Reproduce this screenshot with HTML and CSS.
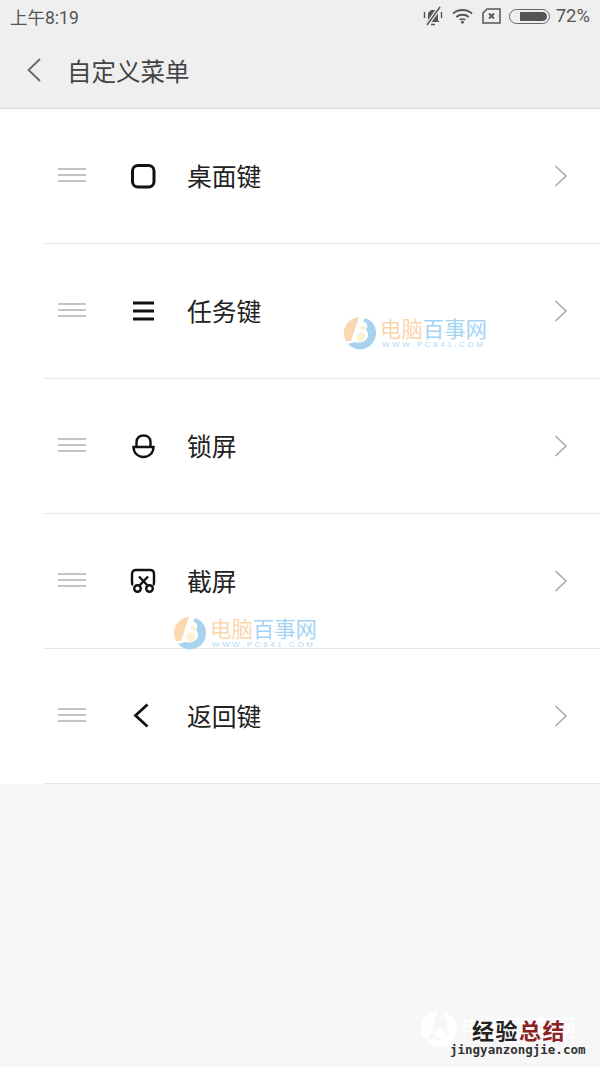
FILE: index.html
```html
<!DOCTYPE html>
<html lang="zh-CN">
<head>
    <meta charset="UTF-8">
    <meta name="viewport" content="width=device-width, initial-scale=1.0">
    <title>自定义菜单</title>
    <link rel="stylesheet" href="styles.css">
</head>
<body>
    <div class="top">
        <div class="status">
            <span class="time">上午8:19</span>
            <div class="status-right">
                <svg class="st-bell" width="20" height="20" viewBox="0 0 20 20" fill="none" stroke="#555" stroke-width="2">
                    <path d="M5 14.500V9C5 6 7 4 10 4C13 4 15 6 15 9V14.500L17 16H3L5 14.500Z" fill="#555" stroke="none"/>
                    <path d="M8 18.500H12" stroke-width="1.600"/>
                    <path d="M1.500 6V12M18.500 6V12" stroke-width="1.400"/>
                    <path d="M17 1L4 19" stroke="#efefef" stroke-width="4"/>
                    <path d="M17 1L4 19" stroke-width="1.500"/>
                </svg>
                <svg class="st-wifi" width="21" height="16" viewBox="0 0 22 16" fill="none" stroke="#555" stroke-width="2">
                    <path d="M1 5.500C6.500 0.500 15.500 0.500 21 5.500"/>
                    <path d="M4.500 9C8 6 14 6 17.500 9"/>
                    <path d="M8 12C9.500 11 12.500 11 14 12"/>
                    <circle cx="11" cy="14.500" r="1.500" fill="#555" stroke="none"/>
                </svg>
                <svg class="st-sim" width="19" height="16" viewBox="0 0 19 16" fill="none" stroke="#555" stroke-width="1.500">
                    <path d="M1 5L5 1H18V15H1Z"/>
                    <path d="M7 5.500L12 10.500M12 5.500L7 10.500" stroke-width="1.800"/>
                </svg>
                <div class="battery"><div class="battery-fill"></div></div>
                <span class="percent">72%</span>
            </div>
        </div>
        <div class="title-bar">
            <svg class="back" width="16" height="26" viewBox="0 0 16 26" fill="none" stroke="#666" stroke-width="1.800">
                <path d="M14 2L2.500 13L14 24"/>
            </svg>
            <h1>自定义菜单</h1>
        </div>
    </div>

    <div class="list">
        <div class="row">
            <div class="handle"><i></i><i></i><i></i></div>
            <div class="icon">
                <svg width="26" height="26" viewBox="0 0 26 26" fill="none" stroke="#111" stroke-width="3">
                    <rect x="2.500" y="2.500" width="21.500" height="21.500" rx="5.500"/>
                </svg>
            </div>
            <span class="label">桌面键</span>
            <svg class="arrow" width="14" height="22" viewBox="0 0 14 22" fill="none" stroke="#aaa" stroke-width="1.600"><path d="M1.500 1L12 11L1.500 21"/></svg>
        </div>
        <div class="row">
            <div class="handle"><i></i><i></i><i></i></div>
            <div class="icon">
                <svg width="26" height="26" viewBox="0 0 26 26" fill="none" stroke="#111" stroke-width="3">
                    <path d="M3 5H24M3 13H24M3 21H24"/>
                </svg>
            </div>
            <span class="label">任务键</span>
            <svg class="arrow" width="14" height="22" viewBox="0 0 14 22" fill="none" stroke="#aaa" stroke-width="1.600"><path d="M1.500 1L12 11L1.500 21"/></svg>
        </div>
        <div class="row">
            <div class="handle"><i></i><i></i><i></i></div>
            <div class="icon">
                <svg width="26" height="26" viewBox="0 0 26 26" fill="none" stroke="#111" stroke-width="2.400">
                    <path d="M6.500 13V9C6.500 5 9.500 2.500 13.500 2.500C17.500 2.500 20.500 5 20.500 9V13"/>
                    <path d="M3.500 14H23.500C23.500 20 19 24 13.500 24C8 24 3.500 20 3.500 14Z"/>
                </svg>
            </div>
            <span class="label">锁屏</span>
            <svg class="arrow" width="14" height="22" viewBox="0 0 14 22" fill="none" stroke="#aaa" stroke-width="1.600"><path d="M1.500 1L12 11L1.500 21"/></svg>
        </div>
        <div class="row">
            <div class="handle"><i></i><i></i><i></i></div>
            <div class="icon">
                <svg width="26" height="26" viewBox="0 0 26 26" fill="none" stroke="#111" stroke-width="2.400">
                    <path d="M3 17C2 16.500 2 15.500 2 14.500V6C2 3.500 3.500 2 6 2H20C22.500 2 24 3.500 24 6V14.500C24 15.500 24 16.500 23 17"/>
                    <path d="M9 8.500L18 18M18 8.500L9 18"/>
                    <circle cx="7.500" cy="20.500" r="3.300"/>
                    <circle cx="19.500" cy="20.500" r="3.300"/>
                </svg>
            </div>
            <span class="label">截屏</span>
            <svg class="arrow" width="14" height="22" viewBox="0 0 14 22" fill="none" stroke="#aaa" stroke-width="1.600"><path d="M1.500 1L12 11L1.500 21"/></svg>
        </div>
        <div class="row">
            <div class="handle"><i></i><i></i><i></i></div>
            <div class="icon">
                <svg width="26" height="26" viewBox="0 0 26 26" fill="none" stroke="#111" stroke-width="2.800">
                    <path d="M17.500 1.500L5.500 12.500L17.500 23.500"/>
                </svg>
            </div>
            <span class="label">返回键</span>
            <svg class="arrow" width="14" height="22" viewBox="0 0 14 22" fill="none" stroke="#aaa" stroke-width="1.600"><path d="M1.500 1L12 11L1.500 21"/></svg>
        </div>
    </div>

    <div class="mark mark-one">
        <svg width="34" height="34" viewBox="0 0 34 34">
            <path d="M16 1A16 16 0 0 0 3 25L8 25Z" fill="#f9d8b2"/>
            <path d="M22 2C29 4 33 10 33 17A16 16 0 0 1 5 28L12 26C18 28 25 25 25 19C25 16 24 15 23 14C25 11 25 6 20 6Z" fill="#a9d2ef"/>
            <circle cx="18" cy="21" r="4.500" fill="#fdf0d4"/>
            <circle cx="20" cy="12" r="2.500" fill="#fdf0d4"/>
        </svg>
        <div class="mark-text">
            <div class="mark-name"><span class="orange">电脑</span><span class="blue">百事网</span></div>
            <div class="mark-url">WWW.PC841.COM</div>
        </div>
    </div>
    <div class="mark mark-two">
        <svg width="34" height="34" viewBox="0 0 34 34">
            <path d="M16 1A16 16 0 0 0 3 25L8 25Z" fill="#f9d8b2"/>
            <path d="M22 2C29 4 33 10 33 17A16 16 0 0 1 5 28L12 26C18 28 25 25 25 19C25 16 24 15 23 14C25 11 25 6 20 6Z" fill="#a9d2ef"/>
            <circle cx="18" cy="21" r="4.500" fill="#fdf0d4"/>
            <circle cx="20" cy="12" r="2.500" fill="#fdf0d4"/>
        </svg>
        <div class="mark-text">
            <div class="mark-name"><span class="orange">电脑</span><span class="blue">百事网</span></div>
            <div class="mark-url">WWW.PC841.COM</div>
        </div>
    </div>

    <div class="stamp">
        <svg class="stamp-logo" width="38" height="38" viewBox="0 0 34 34">
            <path d="M16 1A16 16 0 0 0 3 25L8 25Z" fill="#fff"/>
            <path d="M22 2C29 4 33 10 33 17A16 16 0 0 1 5 28L12 26C18 28 25 25 25 19C25 16 24 15 23 14C25 11 25 6 20 6Z" fill="#fff"/>
            <circle cx="18" cy="21" r="4.500" fill="#fff"/>
        </svg>
        <div class="stamp-ghost">电脑百事网</div>
        <div class="stamp-words">
            <div class="stamp-name">经验<span class="red">总结</span></div>
            <div class="stamp-url">jingyanzongjie.com</div>
        </div>
    </div>
</body>
</html>
```

FILE: styles.css
```css
* {
    box-sizing: border-box;
}
html, body {
    height: 100%;
}
body {
    margin: 0;
    background-color: #f7f7f7;
    font-family: "Noto Sans CJK SC", "Noto Sans", sans-serif;
    overflow: hidden;
}
.top {
    background-color: #efefef;
    height: 109px;
    border-bottom: 1px solid #dedede;
}
.status {
    display: flex;
    justify-content: space-between;
    align-items: center;
    height: 32px;
    padding: 0 10px;
    color: #555;
    font-size: 17.500px;
}
.time {
    font-family: "Roboto", "Noto Sans CJK SC", sans-serif;
}
.status-right {
    display: flex;
    align-items: center;
    gap: 9px;
}
.battery {
    width: 41px;
    height: 15px;
    margin-left: -1px;
    border: 1px solid #666;
    border-radius: 8px;
    padding: 2px;
    display: flex;
    justify-content: flex-end;
}
.battery-fill {
    width: 27px;
    background-color: #555;
    border-radius: 1px 5px 5px 1px;
}
.percent {
    font-family: "Roboto", sans-serif;
    font-size: 18.500px;
    margin-left: -3px;
}
.title-bar {
    display: flex;
    align-items: center;
    height: 76px;
    padding-left: 26px;
}
.back {
    margin-right: 25px;
}
h1 {
    margin: 0;
    font-size: 24.500px;
    font-weight: 400;
    color: #444;
}
.list {
    background-color: #fff;
}
.row {
    display: flex;
    align-items: center;
    height: 135px;
    margin-left: 44px;
    padding: 0 32px 0 14px;
    border-bottom: 1px solid #e9e9e9;
}
.handle {
    width: 28px;
    margin-top: -2px;
    display: flex;
    flex-direction: column;
    gap: 4px;
}
.handle i {
    display: block;
    height: 2px;
    background-color: #c4c4c4;
}
.icon {
    display: flex;
    margin-left: 44px;
    width: 26px;
    height: 26px;
}
.label {
    margin-left: 31px;
    font-size: 24.800px;
    color: #222;
    flex: 1;
    line-height: 1;
    padding-bottom: 1px;
}
.arrow {
    flex: none;
}
.mark {
    position: absolute;
    display: flex;
    align-items: center;
    gap: 3px;
}
.mark-one {
    left: 343px;
    top: 316px;
}
.mark-two {
    left: 173px;
    top: 616px;
}
.mark-name {
    margin: -2px 0 1px;
    font-size: 21.400px;
    line-height: 23px;
    white-space: nowrap;
}
.orange {
    color: #fad6ae;
}
.blue {
    color: #a3d4f5;
}
.mark-url {
    font-family: "Liberation Sans", sans-serif;
    font-size: 8px;
    line-height: 9px;
    letter-spacing: 2.600px;
    padding-left: 2px;
    color: #b2d9f4;
    white-space: nowrap;
}
.stamp {
    position: absolute;
    left: 420px;
    top: 1010px;
    width: 180px;
    height: 57px;
}
.stamp-logo {
    position: absolute;
    left: 0;
    top: 0;
}
.stamp-ghost {
    position: absolute;
    left: 41px;
    top: 2px;
    font-size: 23px;
    line-height: 28px;
    color: #fff;
    white-space: nowrap;
}
.stamp-words {
    position: absolute;
    left: 30px;
    top: 6px;
    white-space: nowrap;
}
.stamp-name {
    font-size: 22px;
    line-height: 26px;
    font-weight: 700;
    color: #222;
    padding-left: 22px;
    letter-spacing: 1.500px;
}
.red {
    color: #8b2323;
}
.stamp-url {
    font-family: "DejaVu Sans Mono", monospace;
    font-size: 12.500px;
    line-height: 16px;
    font-weight: 700;
    color: #333;
}
```
